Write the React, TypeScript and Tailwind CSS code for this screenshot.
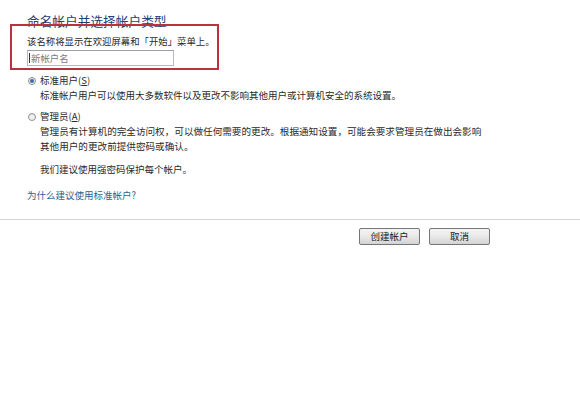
import React from 'react';

const FONT = "font-['Noto_Sans_CJK_SC','Noto_Sans',sans-serif]";

function Radio({ checked }: { checked: boolean }) {
  return (
    <span className="flex size-[8px] items-center justify-center rounded-full border border-[#8e8f8f] bg-gradient-to-b from-[#e6e6e6] to-[#f8f8f8]">
      {checked && <span className="size-[4px] rounded-full bg-[#3b6ea5]" />}
    </span>
  );
}

function WinButton({ label }: { label: string }) {
  return (
    <button className="flex h-[17px] w-[61px] items-center justify-center rounded-[2px] border border-[#767676] bg-gradient-to-b from-[#f4f4f4] via-[#e8e8e8] to-[#d3d3d3] text-[9.5px] leading-none text-[#222]">
      {label}
    </button>
  );
}

export default function App() {
  return (
    <div className={`relative h-[400px] w-[580px] overflow-hidden bg-white text-[#2a2a2a] ${FONT}`}>
      <div className="pl-[27px] pt-[13px]">
        <h1 className="text-[12.7px] leading-4 text-[#24406e]">命名帐户并选择帐户类型</h1>
        <p className="mt-[5px] text-[9.4px] leading-[15px]">该名称将显示在欢迎屏幕和「开始」菜单上。</p>
        <div className="mt-px flex h-[16px] w-[147px] items-center border border-[#b5b8bf] border-t-[#9a9ea6] pl-px text-[9.4px] text-[#7a7a7a]">
          <span className="mr-px h-[10px] w-px bg-[#333]" />
          新帐户名
        </div>

        <div className="mt-[7px] flex items-center text-[9.5px] leading-[15px]">
          <span className="flex w-[13px] justify-start pl-px"><Radio checked /></span>
          <span>标准用户(<span className="underline">S</span>)</span>
        </div>
        <p className="pl-[13px] text-[9.5px] leading-[15px]">
          标准帐户用户可以使用大多数软件以及更改不影响其他用户或计算机安全的系统设置。
        </p>

        <div className="mt-[6px] flex items-center text-[9.5px] leading-[15px]">
          <span className="flex w-[13px] justify-start pl-px"><Radio checked={false} /></span>
          <span>管理员(<span className="underline">A</span>)</span>
        </div>
        <p className="pl-[13px] text-[9.6px] leading-[15px] whitespace-nowrap">
          管理员有计算机的完全访问权，可以做任何需要的更改。根据通知设置，可能会要求管理员在做出会影响
          <br />
          其他用户的更改前提供密码或确认。
        </p>

        <p className="mt-[8px] pl-[13px] text-[9.5px] leading-[15px]">我们建议使用强密码保护每个帐户。</p>

        <p className="mt-[11px] text-[9.5px] leading-[15px] text-[#2f5f8f]">为什么建议使用标准帐户?</p>
      </div>

      <div className="mt-[16px] border-t border-[#d4d4d4]" />

      <div className="mt-[8px] flex justify-end gap-[9px] pr-[90px]">
        <WinButton label="创建帐户" />
        <WinButton label="取消" />
      </div>

      <div className="pointer-events-none absolute left-[10px] top-[24px] h-[46px] w-[209px] border-2 border-[#b8333d]" />
    </div>
  );
}
